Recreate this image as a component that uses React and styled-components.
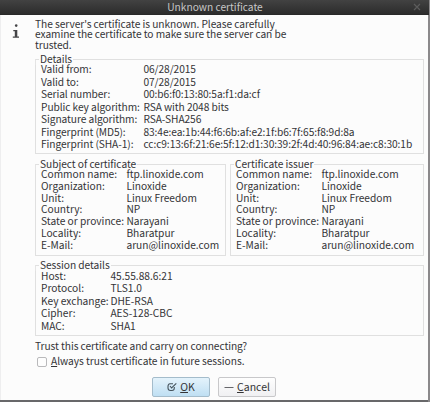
import React from "react";
import styled, { createGlobalStyle } from "styled-components";

const Global = createGlobalStyle`
  * { box-sizing: border-box; }
  body { margin: 0; background: #77777a; overflow: hidden; }
`;
const Desktop = styled.div`
  width: 430px;
  height: 402px;
  padding: 0 2px 2px 0;
  background: linear-gradient(to right, #68686a 428px, #8b898b 428px);
  font-family: "Noto Sans CJK SC", "Noto Sans", sans-serif;
  font-size: 10.2px;
  letter-spacing: -0.03px;
  color: #343437;
`;
const Dialog = styled.main`
  height: 400px;
  background: #fcfcfc;
  border-left: 1px solid #eeeeef;
  display: flex;
  flex-direction: column;
`;
const TitleBar = styled.header`
  flex: none;
  width: 429px;
  height: 15px;
  margin-left: -1px;
  display: grid;
  grid-template-columns: 20px 1fr 31px;
  align-items: center;
  line-height: 12px;
  color: #c7c7c7;
  background: linear-gradient(#424242, #2c2c2c);
  border-bottom: 1px solid #292929;
`;
const Title = styled.span`
  grid-column: 2;
  padding-left: 12px;
  text-align: center;
  letter-spacing: 0;
`;
const CloseIcon = styled.svg`
  width: 8px;
  height: 8px;
  margin-left: 15px;
`;
const Body = styled.div`
  flex: 1;
  display: grid;
  grid-template-columns: 34px 389px;
  padding-top: 4px;
`;
const InfoIcon = styled.svg`
  width: 8px;
  height: 18px;
  margin: 4px 0 0 11px;
`;
const Content = styled.div`
  display: flex;
  flex-direction: column;
`;
const Intro = styled.p`
  margin: 0;
  height: 35px;
  line-height: 10.4px;
  letter-spacing: -0.06px;
  white-space: pre-line;
`;
const Groups = styled.div`
  display: grid;
  grid-template-columns: 191px 194px;
  column-gap: 4px;
  margin: 5px 0 4px;
`;
const Group = styled.section`
  height: ${(p) => p.$height}px;
`;
const Legend = styled.h2`
  margin: 0;
  height: 10px;
  line-height: 10px;
  font-size: inherit;
  font-weight: 400;
  letter-spacing: -0.05px;
  display: flex;
  align-items: center;
  gap: 1px;
  &::before, &::after {
    content: "";
    height: 5px;
    margin-top: 5px;
    border-top: 1px solid #e0e0e0;
  }
  &::before { width: 3px; border-left: 1px solid #e4e4e4; }
  &::after { flex: 1; border-right: 1px solid #e0e0e0; }
`;
const Rows = styled.dl`
  margin: 0;
  height: calc(100% - 10px);
  padding-left: 5px;
  border: 1px solid #e0e0e0;
  border-top: 0;
  display: grid;
  grid-template-columns: ${(p) => p.$label}px 1fr;
  grid-auto-rows: ${(p) => p.$pitch}px;
  line-height: ${(p) => p.$line}px;
  letter-spacing: ${(p) => p.$tracking}px;
  white-space: nowrap;
`;
const Label = styled.dt`margin: 0;`;
const Value = styled.dd`margin: 0;`;
const Question = styled.p`
  margin: 4px 0 0;
  line-height: 12px;
  letter-spacing: -0.06px;
`;
const Check = styled.label`
  display: flex;
  align-items: center;
  gap: 4px;
  height: 12px;
  margin-top: 4px;
  padding-left: 2px;
`;
const CheckText = styled.span`
  line-height: 12px;
  margin-top: -2px;
`;
const Box = styled.input`
  appearance: none;
  width: 10px;
  height: 10px;
  margin: 0;
  border: 1px solid #b9b9bb;
  border-radius: 2px;
  background: #fdfdfd;
`;
const Actions = styled.footer`
  display: flex;
  gap: 8px;
  margin: 9px 0 0 117px;
`;
const Button = styled.button`
  width: 58px;
  height: 20px;
  padding: 0 0 1px;
  display: flex;
  align-items: center;
  justify-content: center;
  gap: 3px;
  font: inherit;
  font-size: 10.5px;
  line-height: 16px;
  color: #343437;
  border: 1px solid ${(p) => (p.$primary ? "#a4bccb" : "#c8c8ca")};
  border-radius: 2px;
  background: ${(p) => (p.$primary ? "linear-gradient(#e4f3fc, #bfdff3)" : "linear-gradient(#fefefe, #f0f0f2)")};
`;
const Key = styled.span`
  text-decoration: underline;
  text-underline-offset: 1px;
  text-decoration-thickness: 1px;
`;

const details = [
  ["Valid from:", "06/28/2015"],
  ["Valid to:", "07/28/2015"],
  ["Serial number:", "00:b6:f0:13:80:5a:f1:da:cf"],
  ["Public key algorithm:", "RSA with 2048 bits"],
  ["Signature algorithm:", "RSA-SHA256"],
  ["Fingerprint (MD5):", "83:4e:ea:1b:44:f6:6b:af:e2:1f:b6:7f:65:f8:9d:8a"],
  ["Fingerprint (SHA-1):", "cc:c9:13:6f:21:6e:5f:12:d1:30:39:2f:4d:40:96:84:ae:c8:30:1b"],
];
const identity = [
  ["Common name:", "ftp.linoxide.com"],
  ["Organization:", "Linoxide"],
  ["Unit:", "Linux Freedom"],
  ["Country:", "NP"],
  ["State or province:", "Narayani"],
  ["Locality:", "Bharatpur"],
  ["E-Mail:", "arun@linoxide.com"],
];
const session = [
  ["Host:", "45.55.88.6:21"],
  ["Protocol:", "TLS1.0"],
  ["Key exchange:", "DHE-RSA"],
  ["Cipher:", "AES-128-CBC"],
  ["MAC:", "SHA1"],
];

function Fields({ title, rows, height, label, pitch, line, tracking = 0 }) {
  return (
    <Group $height={height}>
      <Legend>{title}</Legend>
      <Rows $label={label} $pitch={pitch} $line={line} $tracking={tracking}>
        {rows.map(([name, value]) => (
          <React.Fragment key={name}>
            <Label>{name}</Label>
            <Value>{value}</Value>
          </React.Fragment>
        ))}
      </Rows>
    </Group>
  );
}

export default function App() {
  return (
    <Desktop>
      <Global />
      <Dialog>
        <TitleBar>
          <Title>Unknown certificate</Title>
          <CloseIcon viewBox="0 0 8 8" stroke="#5c5c5c" strokeWidth="1.2">
            <path d="M1 1l6 6M7 1L1 7" />
          </CloseIcon>
        </TitleBar>
        <Body>
          <InfoIcon viewBox="0 0 8 18" fill="#444447">
            <circle cx="4.2" cy="2.6" r="1.3" />
            <path d="M1.3 7h4v6.5h1.7v1.3H.8v-1.3h2V8.2H1.3z" />
          </InfoIcon>
          <Content>
            <Intro>{"The server's certificate is unknown. Please carefully\nexamine the certificate to make sure the server can be\ntrusted."}</Intro>
            <Fields title="Details" rows={details} height={100} label={102.4} pitch={12.5} line={9.8} tracking={-0.07} />
            <Groups>
              <Fields title="Subject of certificate" rows={identity} height={97} label={85.4} pitch={11.8} line={10.8} />
              <Fields title="Certificate issuer" rows={identity} height={97} label={85.4} pitch={11.8} line={10.8} />
            </Groups>
            <Fields title="Session details" rows={session} height={76} label={69.4} pitch={12.4} line={11.2} />
            <Question>Trust this certificate and carry on connecting?</Question>
            <Check>
              <Box type="checkbox" />
              <CheckText><Key>A</Key>lways trust certificate in future sessions.</CheckText>
            </Check>
            <Actions>
              <Button $primary>
                <svg width="10" height="10" viewBox="0 0 10 10" fill="none" stroke="#45535c" strokeWidth="1.1">
                  <path d="M6 1.8H3Q1 2 1 4.5V6q0 2.5 2.5 2.5H5Q7.3 8.5 7.3 6V5M3 4l1.6 2L9.3 1.3" />
                </svg>
                <span><Key>O</Key>K</span>
              </Button>
              <Button>
                <svg width="10" height="10" viewBox="0 0 10 10" stroke="#66666a" strokeWidth="1">
                  <path d="M0.5 5.5h9" />
                </svg>
                <span><Key>C</Key>ancel</span>
              </Button>
            </Actions>
          </Content>
        </Body>
      </Dialog>
    </Desktop>
  );
}
